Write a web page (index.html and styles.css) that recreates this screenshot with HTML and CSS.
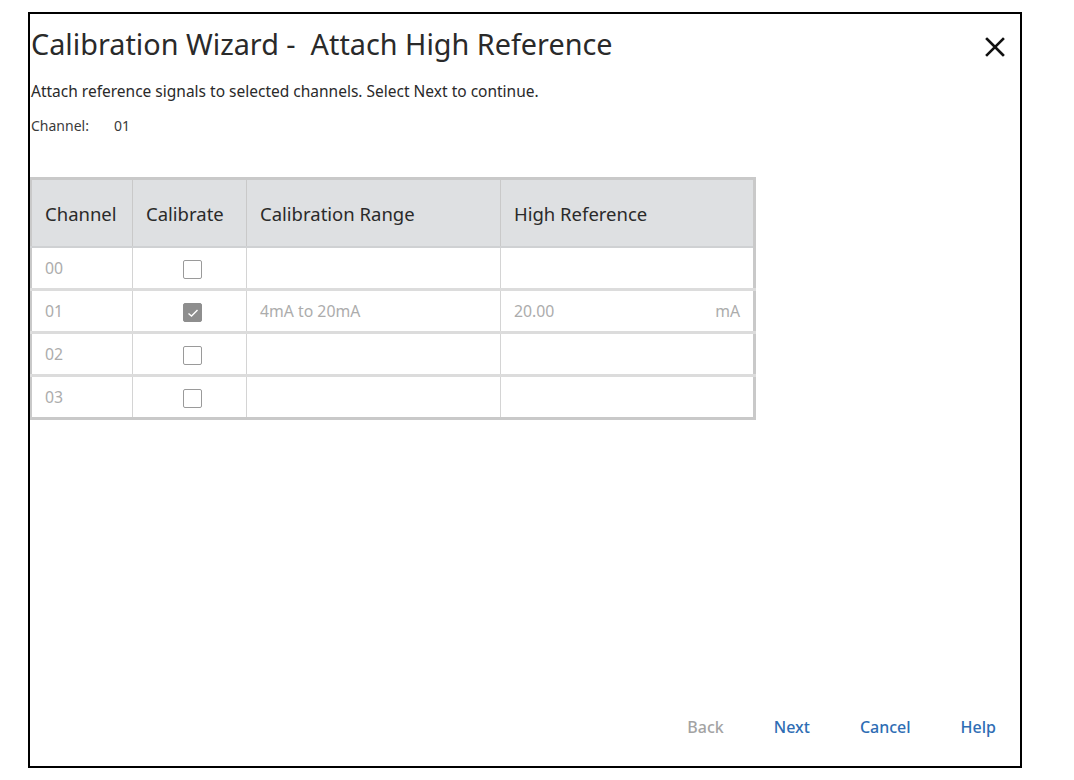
FILE: index.html
```html
<!DOCTYPE html>
<html>
<head>
<meta charset="utf-8">
<link rel="stylesheet" href="styles.css">
</head>
<body>
<div class="dialog">
  <div class="head">
    <h1 class="title">Calibration Wizard - &nbsp;Attach High Reference</h1>
    <button class="close" aria-label="Close">
      <svg width="20" height="20" viewBox="0 0 20 20"><path d="M2 2 L18 18 M18 2 L2 18" stroke="#111" stroke-width="2.6" stroke-linecap="square"/></svg>
    </button>
  </div>
  <p class="intro">Attach reference signals to selected channels. Select Next to continue.</p>
  <p class="chan"><span class="chan-label">Channel:</span><span>01</span></p>

  <table class="grid">
    <thead>
      <tr>
        <th class="c-ch">Channel</th>
        <th class="c-cal">Calibrate</th>
        <th class="c-range">Calibration Range</th>
        <th class="c-ref">High Reference</th>
      </tr>
    </thead>
    <tbody>
      <tr>
        <td>00</td>
        <td class="center"><span class="box"></span></td>
        <td></td>
        <td></td>
      </tr>
      <tr>
        <td>01</td>
        <td class="center"><span class="box checked"><svg width="12" height="10" viewBox="0 0 12 10"><path d="M1.5 5.5 L4.5 8 L10.5 2" stroke="#fff" stroke-width="1.4" fill="none"/></svg></span></td>
        <td>4mA to 20mA</td>
        <td><div class="val"><span>20.00</span><span>mA</span></div></td>
      </tr>
      <tr>
        <td>02</td>
        <td class="center"><span class="box"></span></td>
        <td></td>
        <td></td>
      </tr>
      <tr>
        <td>03</td>
        <td class="center"><span class="box"></span></td>
        <td></td>
        <td></td>
      </tr>
    </tbody>
  </table>

  <div class="footer">
    <button class="btn disabled">Back</button>
    <button class="btn">Next</button>
    <button class="btn">Cancel</button>
    <button class="btn">Help</button>
  </div>
</div>
</body>
</html>
```

FILE: styles.css
```css
html, body {
  margin: 0;
  padding: 0;
  background: #fff;
}
body {
  font-family: "Noto Sans", "Open Sans", sans-serif;
  color: #222;
}
.dialog {
  box-sizing: border-box;
  margin: 12px 0 0 28px;
  width: 994px;
  height: 756px;
  border: 2px solid #000;
  display: flex;
  flex-direction: column;
}
.head {
  display: flex;
  align-items: flex-start;
  justify-content: space-between;
  padding: 12px 15px 0 1px;
}
.title {
  margin: 0;
  font-weight: 400;
  font-size: 28.8px;
  line-height: 36px;
  color: #2a2a2a;
}
.close {
  border: 0;
  background: none;
  padding: 0;
  margin-top: 11px;
  width: 20px;
  height: 20px;
  cursor: pointer;
}
.intro {
  margin: 19px 0 0 1px;
  font-size: 15.5px;
  line-height: 20px;
  letter-spacing: 0;
  color: #2a2a2a;
}
.chan {
  margin: 15px 0 0 1px;
  font-size: 14px;
  line-height: 20px;
  color: #3a3a3a;
  display: flex;
}
.chan-label {
  width: 83px;
}
.grid {
  margin-top: 41px;
  border-collapse: collapse;
  width: 726px;
  border: 3px solid #c9c9c9;
  border-left-width: 2px;
}
.grid th {
  background: #dee0e2;
  font-weight: 400;
  font-size: 18.5px;
  color: #2a2a2a;
  text-align: left;
  height: 66px;
  padding: 0 13px;
  border-left: 1px solid #c9c9c9;
  border-bottom: 2px solid #cfd1d3;
}
.grid th:first-child { border-left: 0; }
.grid td {
  height: 40px;
  padding: 0 13px;
  font-size: 15.8px;
  color: #acacac;
  border-left: 1px solid #d4d4d4;
  border-top: 3px solid #dcdcdc;
}
.grid td:first-child { border-left: 0; }
.grid tbody tr:first-child td { border-top: 0; }
.c-ch { width: 74px; }
.c-cal { width: 87px; }
.c-range { width: 227px; }
.center { text-align: center; }
.grid td.center { padding: 0 8px 0 14px; }
.box {
  display: inline-flex;
  align-items: center;
  justify-content: center;
  box-sizing: border-box;
  width: 19px;
  height: 19px;
  border: 1.5px solid #9a9a9a;
  border-radius: 2px;
  background: #fff;
  vertical-align: middle;
}
.box.checked {
  background: #8e8e8e;
  border-color: #8e8e8e;
}
.val {
  display: flex;
  justify-content: space-between;
}
.footer {
  margin-top: auto;
  display: flex;
  justify-content: flex-end;
  padding: 0 24px 28px 0;
}
.btn {
  border: 0;
  background: none;
  font-family: "Noto Sans", "Open Sans", sans-serif;
  font-size: 16px;
  font-weight: 500;
  color: #2e6db4;
  padding: 0;
  margin-left: 50px;
  cursor: pointer;
}
.btn.disabled { color: #a3a3a3; }
```
